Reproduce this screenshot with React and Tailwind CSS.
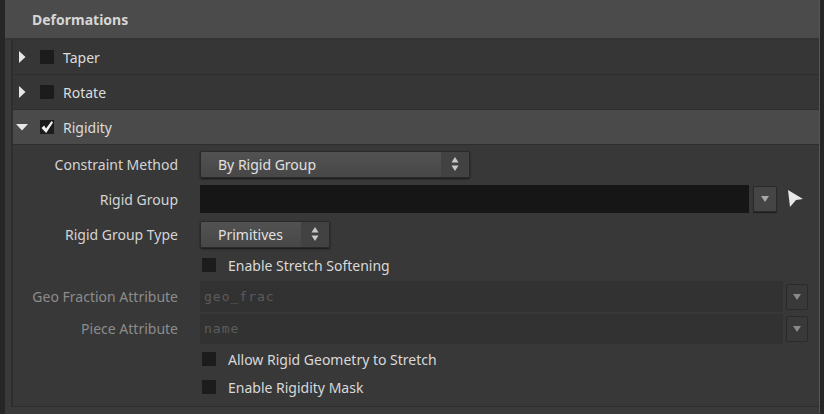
import React from "react";

const font = { fontFamily: '"Noto Sans", "Open Sans", sans-serif' };

const RightTri = () => (
    <svg width="8" height="12" viewBox="0 0 8 12">
        <path d="M1 0 L7.5 6 L1 12 Z" fill="#e6e6e6" />
    </svg>
);

const DownTri = () => (
    <svg width="12" height="8" viewBox="0 0 12 8">
        <path d="M0 1 L12 1 L6 7.5 Z" fill="#e6e6e6" />
    </svg>
);

const Stepper = () => (
    <svg width="8" height="16" viewBox="0 0 8 16">
        <path d="M4 1 L7.5 6.5 L0.5 6.5 Z" fill="#c8c8c8" />
        <path d="M4 15 L7.5 9.5 L0.5 9.5 Z" fill="#c8c8c8" />
    </svg>
);

const Box = ({ checked }) => (
    <div className="w-[14px] h-[14px] bg-[#1c1c1c] flex items-center justify-center">
        {checked && (
            <svg width="14" height="14" viewBox="0 0 14 14">
                <path d="M1.5 8 L4.2 5.6 L6 8.4 L11.6 1 L13 2.4 L6.2 13 Z" fill="#f2f2f2" />
            </svg>
        )}
    </div>
);

const Folder = ({ label, open, checked }) => (
    <div
        className={`h-[35px] flex items-center border-b border-[#2e2e2e] ${
            open ? "bg-[#4a4a4a]" : "bg-[#363636]"
        }`}
    >
        <div className={`w-[27px] flex ${open ? "pl-[3px]" : "pl-[5px]"}`}>
            {open ? <DownTri /> : <RightTri />}
        </div>
        <Box checked={checked} />
        <span className="ml-[9px] text-[14px] text-[#dcdcdc]">{label}</span>
    </div>
);

const Label = ({ children, dim }) => (
    <div className={`w-[167px] text-right text-[14px] pr-[2px] ${dim ? "text-[#8c8c8c]" : "text-[#d4d4d4]"}`}>
        {children}
    </div>
);

const DropBtn = ({ dim }) => (
    <div
        className={`${dim ? "w-[22px] bg-[#393939]" : "w-[24px] bg-[#454545] shadow-[0_1px_1px_rgba(0,0,0,0.5)]"} h-[26px] rounded-[2px] border border-[#2a2a2a] flex items-center justify-center`}
    >
        <svg width="8" height="6" viewBox="0 0 8 6">
            <path d="M0 0 L8 0 L4 6 Z" fill={dim ? "#8a8a8a" : "#a8a8a8"} />
        </svg>
    </div>
);

const Select = ({ value, width }) => (
    <div
        className={`${width} h-[27px] flex rounded-[2px] border border-[#2a2a2a] shadow-[0_1px_2px_rgba(0,0,0,0.6)] bg-gradient-to-b from-[#525252] to-[#474747]`}
    >
        <div className="flex-1 flex items-center pl-[17px] text-[14px] text-[#e0e0e0]">{value}</div>
        <div className="w-[28px] flex items-center justify-center bg-[#424242]">
            <Stepper />
        </div>
    </div>
);

const CheckRow = ({ label, h }) => (
    <div className={`flex items-center ${h}`}>
        <div className="w-[189px]" />
        <Box />
        <span className="ml-[12px] text-[14px] text-[#d8d8d8]">{label}</span>
    </div>
);

const mono = { fontFamily: '"DejaVu Sans Mono", monospace' };

export default function App() {
    return (
        <div style={font} className="w-[824px] h-[414px] bg-[#262626] flex pl-[5px] pr-[4px] overflow-hidden">
            <div className="flex-1 flex flex-col bg-[#3a3a3a] border-r border-[#555]">
                {/* header */}
                <div className="h-[40px] shrink-0 bg-[#4b4b4b] flex items-center pl-[27px] border-b-2 border-[#333]">
                    <span className="font-bold text-[14px] text-[#d6d6d6]">Deformations</span>
                </div>

                <div className="flex-1 flex pl-[6px] pb-[7px]">
                    <div className="flex-1 flex flex-col border-l-2 border-[#2e2e2e] border-b border-b-[#2e2e2e] bg-[#383838]">
                        <Folder label="Taper" />
                        <Folder label="Rotate" />
                        <Folder label="Rigidity" open checked />

                        <div className="flex flex-col pt-[5px]">
                            <div className="flex items-center h-[28px]">
                                <Label>Constraint Method</Label>
                                <div className="w-[20px]" />
                                <Select value="By Rigid Group" width="w-[270px]" />
                            </div>

                            <div className="flex items-center h-[32px] mt-[5px]">
                                <Label>Rigid Group</Label>
                                <div className="w-[20px]" />
                                <div className="w-[549px] h-[28px] bg-[#161616]" />
                                <div className="w-[4px]" />
                                <DropBtn />
                                <div className="w-[10px]" />
                                <svg width="18" height="20" viewBox="0 0 18 20">
                                    <path d="M1 1 L16 10 L9 11 L3 18 Z" fill="#e8e8e8" />
                                </svg>
                            </div>

                            <div className="flex items-center h-[30px] mt-[4px]">
                                <Label>Rigid Group Type</Label>
                                <div className="w-[20px]" />
                                <Select value="Primitives" width="w-[130px]" />
                            </div>

                            <CheckRow label="Enable Stretch Softening" h="h-[32px]" />

                            <div className="flex items-center h-[31px]">
                                <Label dim>Geo Fraction Attribute</Label>
                                <div className="w-[20px]" />
                                <div className="w-[583px] h-[31px] bg-[#323232] flex items-center pl-[4px] text-[13px] text-[#5c5c5c] tracking-[1px]" style={mono}>
                                    geo_frac
                                </div>
                                <div className="w-[3px]" />
                                <DropBtn dim />
                            </div>

                            <div className="flex items-center h-[33px]">
                                <Label dim>Piece Attribute</Label>
                                <div className="w-[20px]" />
                                <div className="w-[583px] h-[30px] bg-[#323232] flex items-center pl-[4px] text-[13px] text-[#5c5c5c] tracking-[1px]" style={mono}>
                                    name
                                </div>
                                <div className="w-[3px]" />
                                <DropBtn dim />
                            </div>

                            <CheckRow label="Allow Rigid Geometry to Stretch" h="h-[28px]" />
                            <CheckRow label="Enable Rigidity Mask" h="h-[28px]" />
                        </div>
                    </div>
                </div>
            </div>
        </div>
    );
}
